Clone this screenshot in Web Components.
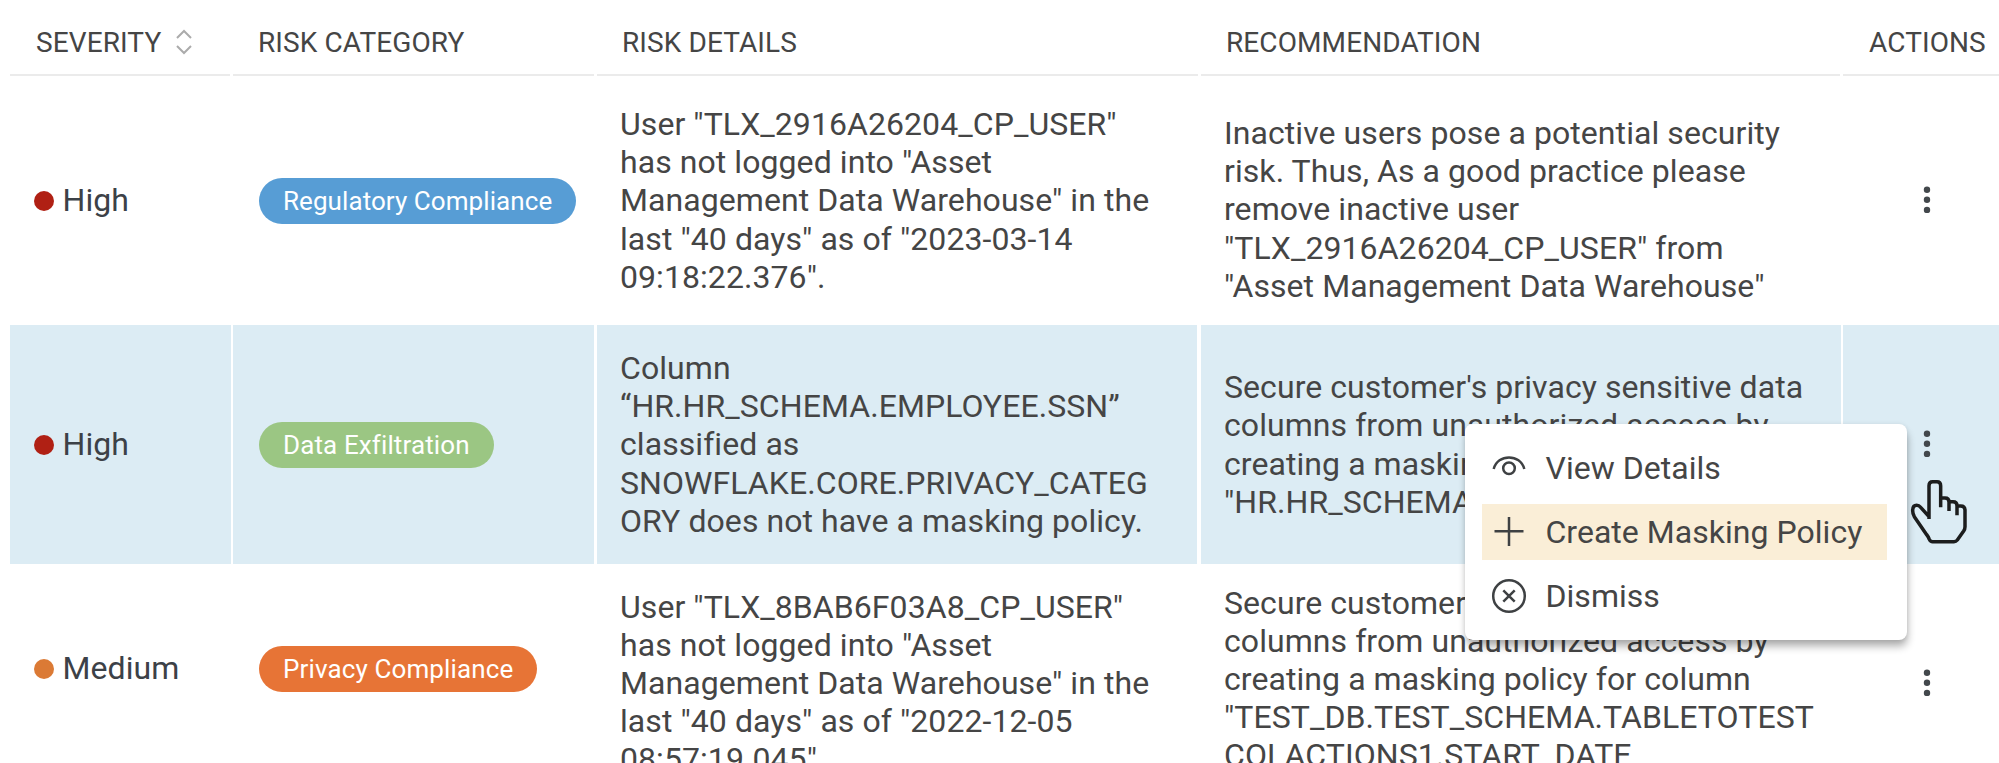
<!DOCTYPE html>
<html lang="en">
<head>
<meta charset="utf-8">
<title>Risks</title>
<style>
    html, body {
        margin: 0;
        height: 763px;
        overflow: hidden;
        background: #ffffff;
    }

    body {
        position: relative;
        font-family: Roboto, "Liberation Sans", sans-serif;
        font-size: 32px;
        line-height: 38.1px;
        letter-spacing: 0.07px;
        color: #454545;
    }
</style>
</head>
<body>
<risk-table>
    <risk-header></risk-header>
    <risk-row style="--row-height: 249px; --recommendation-drop: 18px">
        <severity-level slot="severity" level="high">High</severity-level>
        <category-pill slot="category" kind="regulatory">Regulatory Compliance</category-pill>
        <span slot="details">User "TLX_2916A26204_CP_USER"<br>has not logged into "Asset<br>Management Data Warehouse" in the<br>last "40 days" as of "2023-03-14<br>09:18:22.376".</span>
        <span slot="recommendation">Inactive users pose a potential security<br>risk. Thus, As a good practice please<br>remove inactive user<br>"TLX_2916A26204_CP_USER" from<br>"Asset Management Data Warehouse"</span>
    </risk-row>
    <risk-row active style="--row-height: 239px">
        <severity-level slot="severity" level="high">High</severity-level>
        <category-pill slot="category" kind="exfiltration">Data Exfiltration</category-pill>
        <span slot="details">Column<br>“HR.HR_SCHEMA.EMPLOYEE.SSN”<br>classified as<br>SNOWFLAKE.CORE.PRIVACY_CATEG<br>ORY does not have a masking policy.</span>
        <span slot="recommendation">Secure customer's privacy sensitive data<br>columns from unauthorized access by<br>creating a masking policy for column<br>"HR.HR_SCHEMA.EMPLOYEE.SSN"</span>
    </risk-row>
    <risk-row style="--row-height: 238px; --lead-shift: 29px; --recommendation-shift: 8px">
        <severity-level slot="severity" level="medium">Medium</severity-level>
        <category-pill slot="category" kind="privacy">Privacy Compliance</category-pill>
        <span slot="details">User "TLX_8BAB6F03A8_CP_USER"<br>has not logged into "Asset<br>Management Data Warehouse" in the<br>last "40 days" as of "2022-12-05<br>08:57:19.045".</span>
        <span slot="recommendation">Secure customer's privacy sensitive data<br>columns from unauthorized access by<br>creating a masking policy for column<br>"TEST_DB.TEST_SCHEMA.TABLETOTEST<br>COLACTIONS1.START_DATE</span>
    </risk-row>
</risk-table>
<action-menu>
    <action-item icon="view">View Details</action-item>
    <action-item icon="create" selected>Create Masking Policy</action-item>
    <action-item icon="dismiss">Dismiss</action-item>
</action-menu>
<hand-pointer></hand-pointer>

<script>
const COLUMNS = '223px 364px 604px 642px 1fr';

class RiskTable extends HTMLElement {

    constructor() {
        super();
        this.shadow = this.attachShadow({mode: 'open'});
        this.shadow.innerHTML = `<style>
            :host {
                display: flex;
                flex-flow: column;
                box-sizing: border-box;
                height: 763px;
                padding-left: 10px;
                overflow: hidden;
            }
        </style>
        <slot></slot>`;
    }

}
customElements.define('risk-table', RiskTable);

class RiskHeader extends HTMLElement {

    constructor() {
        super();
        this.shadow = this.attachShadow({mode: 'open'});
        this.shadow.innerHTML += this.style();
        this.shadow.innerHTML += this.html();
    }

    style() {
        return `<style>
            :host {
                display: grid;
                flex: none;
                grid-template-columns: ${COLUMNS};
                height: 76px;
                font-size: 28px;
                line-height: 34px;
                letter-spacing: 0.1px;
                white-space: nowrap;
            }

            div {
                box-sizing: border-box;
                display: flex;
                align-items: flex-start;
                margin-right: 3px;
                padding: 26px 0 0 25px;
                border-bottom: 2px solid #ebebeb;
            }

            .sortable {
                padding-left: 26px;
            }

            div:last-child {
                margin-right: 0;
                padding-left: 26px;
            }

            svg {
                margin: 3px 0 0 14px;
            }
        </style>`;
    }

    html() {
        return `<div class="sortable">SEVERITY
                    <svg width="18" height="26" viewBox="0 0 18 26" fill="none" stroke="#ababab" stroke-width="2">
                        <path d="M2 9 L9 2 L16 9 M2 17 L9 24 L16 17"/>
                    </svg>
                </div>
                <div>RISK CATEGORY</div>
                <div>RISK DETAILS</div>
                <div>RECOMMENDATION</div>
                <div>ACTIONS</div>`;
    }

}
customElements.define('risk-header', RiskHeader);

class RiskRow extends HTMLElement {

    constructor() {
        super();
        this.shadow = this.attachShadow({mode: 'open'});
        this.shadow.innerHTML += this.style();
        this.shadow.innerHTML += this.html();
    }

    style() {
        return `<style>
            :host {
                display: grid;
                flex: none;
                grid-template-columns: ${COLUMNS};
                height: var(--row-height);
                white-space: nowrap;
            }

            div {
                box-sizing: border-box;
                display: flex;
                align-items: center;
                margin-right: 3px;
            }

            :host([active]) div {
                background: #dcecf4;
            }

            .severity {
                margin-right: 2px;
                padding: 0 0 var(--lead-shift, 0) 24px;
            }

            .category {
                padding: 0 0 var(--lead-shift, 0) 26px;
            }

            .details {
                margin-right: 4px;
                padding-left: 23px;
            }

            .recommendation {
                margin-right: 2px;
                padding: var(--recommendation-drop, 0) 0 var(--recommendation-shift, 0) 23px;
            }

            .actions {
                margin-right: 0;
                padding: 0 0 1px 80px;
            }
        </style>`;
    }

    html() {
        return `<div class="severity"><slot name="severity"></slot></div>
                <div class="category"><slot name="category"></slot></div>
                <div class="details"><slot name="details"></slot></div>
                <div class="recommendation"><slot name="recommendation"></slot></div>
                <div class="actions">
                    <svg width="8" height="28" viewBox="0 0 8 28" fill="#43484c">
                        <circle cx="4" cy="3.8" r="3.2"/>
                        <circle cx="4" cy="13.8" r="3.2"/>
                        <circle cx="4" cy="23.9" r="3.2"/>
                    </svg>
                </div>`;
    }

}
customElements.define('risk-row', RiskRow);

class SeverityLevel extends HTMLElement {

    constructor() {
        super();
        this.shadow = this.attachShadow({mode: 'open'});
        this.shadow.innerHTML = `<style>
            :host {
                display: flex;
                align-items: center;
                gap: 8.5px;
                color: #3c4147;
            }

            i {
                width: 20px;
                height: 20px;
                border-radius: 50%;
                background: #b02014;
            }

            :host([level="medium"]) i {
                background: #db7a35;
            }
        </style>
        <i></i><span><slot></slot></span>`;
    }

}
customElements.define('severity-level', SeverityLevel);

class CategoryPill extends HTMLElement {

    constructor() {
        super();
        this.shadow = this.attachShadow({mode: 'open'});
        this.shadow.innerHTML = `<style>
            :host {
                display: block;
                height: 46px;
                padding: 0 24px;
                border-radius: 23px;
                background: #579dd5;
                color: #ffffff;
                font-size: 26px;
                line-height: 46px;
                letter-spacing: 0.07px;
            }

            :host([kind="exfiltration"]) {
                background: #9bc683;
                letter-spacing: 0.12px;
            }

            :host([kind="privacy"]) {
                background: #e77436;
                letter-spacing: 0.12px;
            }
        </style>
        <slot></slot>`;
    }

}
customElements.define('category-pill', CategoryPill);

class ActionMenu extends HTMLElement {

    constructor() {
        super();
        this.shadow = this.attachShadow({mode: 'open'});
        this.shadow.innerHTML = `<style>
            :host {
                position: absolute;
                left: 1465px;
                top: 424px;
                box-sizing: border-box;
                width: 442px;
                display: flex;
                flex-flow: column;
                gap: 8px;
                padding: 16px 20px 16px 17px;
                border-radius: 8px;
                background: #ffffff;
                box-shadow: 1px 7px 8px -1px rgba(0,0,0,0.33), 0 0 5px rgba(0,0,0,0.08);
            }
        </style>
        <slot></slot>`;
    }

}
customElements.define('action-menu', ActionMenu);

class ActionItem extends HTMLElement {

    constructor() {
        super();
        this.shadow = this.attachShadow({mode: 'open'});
        this.shadow.innerHTML += this.style();
        this.shadow.innerHTML += this.html();
    }

    style() {
        return `<style>
            :host {
                display: flex;
                align-items: center;
                gap: 18.5px;
                height: 56px;
                padding-left: 9px;
                letter-spacing: 0.03px;
                white-space: nowrap;
            }

            :host([selected]) {
                background: #faeed7;
            }
        </style>`;
    }

    html() {
        const icons = {
            view: '<path d="M2.7 19 C6.5 3.5 29.5 3.5 33.3 19"/><circle cx="18" cy="18.3" r="5.8"/>',
            create: '<path d="M18 3 V32 M3.5 17.3 H32.5"/>',
            dismiss: '<circle cx="18" cy="18" r="15.8"/><path d="M12.3 12.3 L23.7 23.7 M23.7 12.3 L12.3 23.7"/>'
        };
        return `<svg width="36" height="36" viewBox="0 0 36 36" fill="none" stroke="#3e4143" stroke-width="2.5">${icons[this.getAttribute('icon')]}</svg>
                <span><slot></slot></span>`;
    }

}
customElements.define('action-item', ActionItem);

class HandPointer extends HTMLElement {

    constructor() {
        super();
        this.shadow = this.attachShadow({mode: 'open'});
        this.shadow.innerHTML = `<style>
            :host {
                position: absolute;
                left: 1910px;
                top: 478px;
                display: block;
                line-height: 0;
            }
        </style>
        <svg width="59" height="67" viewBox="90 234 177 201" fill="none" stroke="#1c1d1d" stroke-width="10.5" stroke-linejoin="round">
            <path d="M147 357 V257 Q147 245 158 245 H171 Q182 245 182 257 V322 M182 294 H195 Q207 294 207 306 V333
                M207 305 H219 Q231 305 231 317 V346 M231 318 H242 Q255 318 255 331 V380 Q255 387 251 393 L232 420
                Q228 425 222 425 H158 Q151 425 148 418 Q146 412 140 404 L103 350 Q98 341 98 332 Q98 316 110 316
                Q117 316 122 322 L147 350"/>
        </svg>`;
    }

}
customElements.define('hand-pointer', HandPointer);
</script>
</body>
</html>
